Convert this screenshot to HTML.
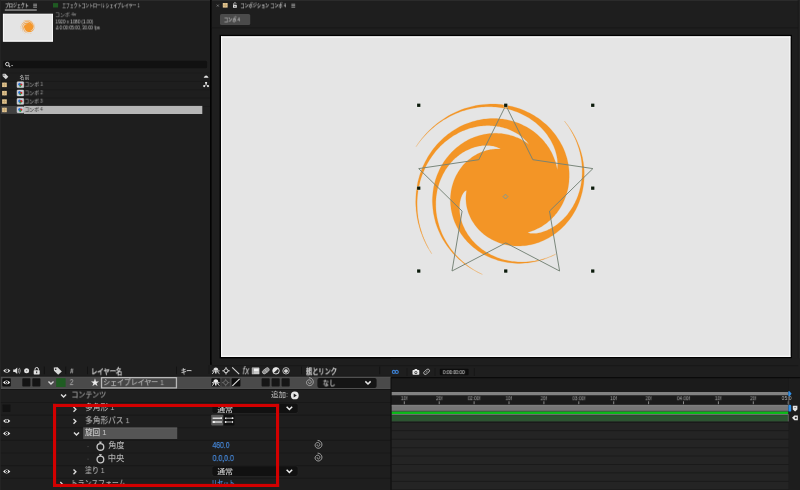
<!DOCTYPE html>
<html lang="ja">
<head>
<meta charset="utf-8">
<title>After Effects</title>
<style>
html,body{margin:0;padding:0;}
body{width:800px;height:490px;overflow:hidden;background:#1e1e1e;font-family:"Liberation Sans","Noto Sans CJK JP",sans-serif;}
#app{position:relative;width:800px;height:490px;overflow:hidden;background:#1e1e1e;}
#app svg{position:absolute;left:0;top:0;display:block;}
#app span{position:absolute;display:block;left:0;top:0;white-space:pre;line-height:1;transform-origin:0 0;will-change:transform;}
#app svg.top{z-index:5;}
</style>
</head>
<body>
<div id="app">
<svg width="800" height="490" viewBox="0 0 800 490">
<rect x="0" y="0" width="800" height="1" fill="#2b2b2b"/>
<rect x="4.8" y="9.3" width="32" height="1.5" fill="#8c8c8c"/>
<g transform="translate(33.2 3.5)"><path d="M0 .7H3.8M0 2.2H3.8M0 3.7H3.8" stroke="#a2a2a2" stroke-width=".85"/></g>
<rect x="53" y="3.1" width="5.1" height="4.4" fill="#1f5a22"/>
<rect x="2.9" y="13.7" width="50.1" height="28.1" fill="#ffffff"/>
<rect x="3.6" y="14.3" width="48.7" height="26.3" fill="#e4e4e4"/>
<path d="M32.45 32.77L30.59 33.42L28.70 33.52L26.96 33.11L25.50 32.29L24.39 31.17L23.70 29.87L23.42 28.53L23.51 27.25L23.92 26.13L24.57 25.24L25.35 24.58L26.19 24.17L27.00 23.98L27.75 23.96L27.39 23.79L26.89 23.67L26.25 23.66L25.51 23.79L24.70 24.11L23.89 24.67L23.14 25.47L22.55 26.52L22.21 27.79L22.18 29.21L22.54 30.71L23.33 32.17L24.54 33.46L26.15 34.47L24.40 33.42L23.08 32.01L22.23 30.40L21.88 28.71L21.98 27.09L22.49 25.64L23.30 24.44L24.33 23.54L25.46 22.96L26.60 22.67L27.69 22.65L28.66 22.83L29.49 23.16L30.16 23.57L29.79 23.15L29.27 22.73L28.56 22.36L27.69 22.09L26.65 21.98L25.50 22.11L24.30 22.51L23.11 23.22L22.05 24.26L21.20 25.61L20.67 27.22L20.56 29.02L20.92 30.91L21.81 32.74L20.81 30.72L20.43 28.61L20.65 26.58L21.38 24.77L22.52 23.29L23.95 22.22L25.53 21.59L27.12 21.39L28.61 21.58L29.92 22.09L30.99 22.84L31.79 23.74L32.31 24.71L32.58 25.68L32.62 25.29L32.59 24.78L32.45 24.17L32.17 23.49L31.71 22.75L31.05 22.02L30.17 21.36L29.07 20.82L27.77 20.48L26.31 20.41L24.75 20.67L23.19 21.30L21.72 22.33L20.46 23.75L22.02 22.01L23.93 20.82L26.02 20.24L28.09 20.26L29.98 20.82L31.54 21.82L32.69 23.14L33.39 24.63L33.61 26.16L33.42 27.60L32.87 28.85L32.06 29.84L31.08 30.53L30.05 30.93L30.18 31.01L30.43 31.05L30.80 31.03L31.27 30.93L31.83 30.72L32.46 30.36L33.10 29.83L33.71 29.11L34.23 28.18L34.60 27.07L34.73 25.79L34.57 24.41L34.07 22.98L33.20 21.60L34.34 23.41L34.86 25.37L34.79 27.30L34.17 29.03L33.13 30.44L31.79 31.43L30.31 31.97L28.82 32.07L27.46 31.76L26.33 31.14L25.49 30.29L24.96 29.32L24.75 28.34L24.80 27.43L24.65 27.49L24.49 27.67L24.34 27.99L24.22 28.44L24.19 29.02L24.28 29.72L24.55 30.49L25.03 31.30L25.75 32.08L26.73 32.74L27.95 33.22L29.36 33.43L30.89 33.30Z" fill="#f39526"/>
<circle cx="28" cy="26.3" r="6.6" fill="#f7a040" opacity=".18"/>
<rect x="3.1" y="60.8" width="204" height="7.5" rx="1.5" fill="#111111"/>
<circle cx="7.3" cy="64.1" r="1.75" fill="none" stroke="#cfcfcf" stroke-width="1"/><path d="M8.6 65.4L10.2 67" stroke="#cfcfcf" stroke-width="1.1"/><path d="M11 64.9H13.2L12.1 66.2Z" fill="#bdbdbd"/>
<g transform="translate(2 73)"><path d="M.6 .8L3.2 .6L6.3 3.8L3.8 6.3L.7 3.2Z" fill="#d6d6d6"/><circle cx="2" cy="2.1" r=".6" fill="#1e1e1e"/></g>
<g transform="translate(203.1 74.5)"><path d="M.5 3.2Q3 -1.2 5.5 3.2Z" fill="#e6e6e6"/></g>
<g transform="translate(202.9 81.5)"><circle cx="3.2" cy="1.3" r="1.1" fill="#e6e6e6"/><circle cx="1.3" cy="4.6" r="1.1" fill="#e6e6e6"/><circle cx="5.1" cy="4.6" r="1.1" fill="#e6e6e6"/><path d="M3.2 1.3V3M1.3 4.6L3.2 3L5.1 4.6" stroke="#e6e6e6" stroke-width=".7" fill="none"/></g>
<rect x="0" y="72.6" width="210" height="0.8" fill="#191919"/>
<rect x="0" y="80.95" width="210" height="0.8" fill="#191919"/>
<rect x="0" y="89.3" width="210" height="0.8" fill="#191919"/>
<rect x="0" y="97.65" width="210" height="0.8" fill="#191919"/>
<rect x="0" y="106" width="210" height="0.8" fill="#191919"/>
<rect x="0" y="106" width="24" height="7.9" fill="#414141"/>
<rect x="24" y="105.9" width="178.3" height="8.1" fill="#b6b6b6"/>
<rect x="2.1" y="82.6" width="4.7" height="4.5" fill="#e4c692"/>
<g transform="translate(2.1 82.6)"><path d="M2.35 0V4.5M0 2.25H4.7" stroke="#b59a66" stroke-width=".55"/></g>
<g transform="translate(16.8 81.5)"><rect x=".3" y=".3" width="6.6" height="5.8" rx=".6" fill="#c9cdd6" stroke="#e8e8e8" stroke-width=".5"/><circle cx="2.9" cy="2.8" r="1.5" fill="#2d6fd6"/><circle cx="4.4" cy="3.1" r="1.2" fill="#d0302a"/><circle cx="3.5" cy="4.3" r="1.1" fill="#2e9a4a"/></g>
<rect x="2.1" y="90.9" width="4.7" height="4.5" fill="#e4c692"/>
<g transform="translate(2.1 90.9)"><path d="M2.35 0V4.5M0 2.25H4.7" stroke="#b59a66" stroke-width=".55"/></g>
<g transform="translate(16.8 89.8)"><rect x=".3" y=".3" width="6.6" height="5.8" rx=".6" fill="#c9cdd6" stroke="#e8e8e8" stroke-width=".5"/><circle cx="2.9" cy="2.8" r="1.5" fill="#2d6fd6"/><circle cx="4.4" cy="3.1" r="1.2" fill="#d0302a"/><circle cx="3.5" cy="4.3" r="1.1" fill="#2e9a4a"/></g>
<rect x="2.1" y="99.3" width="4.7" height="4.5" fill="#e4c692"/>
<g transform="translate(2.1 99.3)"><path d="M2.35 0V4.5M0 2.25H4.7" stroke="#b59a66" stroke-width=".55"/></g>
<g transform="translate(16.8 98.2)"><rect x=".3" y=".3" width="6.6" height="5.8" rx=".6" fill="#c9cdd6" stroke="#e8e8e8" stroke-width=".5"/><circle cx="2.9" cy="2.8" r="1.5" fill="#2d6fd6"/><circle cx="4.4" cy="3.1" r="1.2" fill="#d0302a"/><circle cx="3.5" cy="4.3" r="1.1" fill="#2e9a4a"/></g>
<rect x="2.1" y="107.7" width="4.7" height="4.5" fill="#e4c692"/>
<g transform="translate(2.1 107.7)"><path d="M2.35 0V4.5M0 2.25H4.7" stroke="#b59a66" stroke-width=".55"/></g>
<g transform="translate(16.8 106.6)"><rect x=".3" y=".3" width="6.6" height="5.8" rx=".6" fill="#c9cdd6" stroke="#e8e8e8" stroke-width=".5"/><circle cx="2.9" cy="2.8" r="1.5" fill="#2d6fd6"/><circle cx="4.4" cy="3.1" r="1.2" fill="#d0302a"/><circle cx="3.5" cy="4.3" r="1.1" fill="#2e9a4a"/></g>
<rect x="210.1" y="0" width="1.6" height="364.8" fill="#000000"/>
<rect x="208.6" y="365" width="0.8" height="9" fill="#161616"/>
<rect x="211.8" y="1" width="588.2" height="27" fill="#1e1e1e"/>
<rect x="211.8" y="27.3" width="588.2" height="1.9" fill="#171717"/>
<rect x="211.8" y="28.4" width="588.2" height="334" fill="#1e1e1e"/>
<g transform="translate(216.6 4.4)"><path d="M.2 .2L2.2 2.2M2.2 .2L.2 2.2" stroke="#a0a0a0" stroke-width=".6"/></g>
<rect x="222.8" y="3" width="4.8" height="4.6" fill="#e4c692"/>
<g transform="translate(222.8 3)"><path d="M2.4 0V4.6M0 2.3H4.8" stroke="#b59a66" stroke-width=".55"/></g>
<g transform="translate(232.4 2.2)"><rect x=".6" y="2.6" width="3.8" height="3" rx=".4" fill="#e0e0e0"/><path d="M1.3 2.8V1.7Q1.3 .5 2.5 .5Q3.7 .5 3.7 1.5" fill="none" stroke="#e0e0e0" stroke-width=".7"/><circle cx="2.5" cy="4.1" r=".6" fill="#1e1e1e"/></g>
<g transform="translate(291.4 3.5)"><path d="M0 .7H3.8M0 2.2H3.8M0 3.7H3.8" stroke="#a2a2a2" stroke-width=".85"/></g>
<rect x="220" y="13.9" width="30.2" height="11.1" rx="1.6" fill="#4b4b4b"/>
<rect x="219.6" y="34.8" width="572.2" height="323.6" fill="#000000"/>
<rect x="221" y="36.4" width="569.4" height="320.5" fill="#e5e5e5"/>
<rect x="221" y="36.3" width="569.4" height="1.3" fill="#fbfbfb"/>
<rect x="221" y="355.7" width="569.4" height="1.2" fill="#fbfbfb"/>
<rect x="221" y="36.4" width="1.1" height="320.5" fill="#f8f8f8"/>
<rect x="789.4" y="36.4" width="1" height="320.5" fill="#f8f8f8"/>
<g transform="translate(0 0)"><path d="M555.7 254.2L553.3 255.4L550.8 256.6L548.3 257.6L545.7 258.6L543.2 259.5L540.6 260.3L538.0 261.0L535.5 261.6L532.9 262.1L530.3 262.5L527.7 262.9L525.1 263.1L522.6 263.3L520.0 263.4L517.5 263.4L514.9 263.3L512.4 263.1L509.9 262.8L507.5 262.5L505.1 262.1L502.7 261.6L500.3 261.0L498.0 260.4L495.7 259.6L493.4 258.8L491.2 258.0L489.0 257.0L486.9 256.1L484.8 255.0L482.8 253.9L480.9 252.7L478.9 251.5L477.1 250.2L475.3 248.8L473.5 247.4L471.8 246.0L470.2 244.5L468.6 243.0L467.1 241.4L465.7 239.8L464.3 238.2L463.0 236.5L461.7 234.8L460.5 233.1L459.4 231.3L458.4 229.6L457.4 227.8L456.5 225.9L455.6 224.1L454.8 222.3L454.1 220.4L453.4 218.5L452.9 216.7L452.3 214.8L451.9 212.9L451.5 211.0L451.1 209.2L450.9 207.3L450.7 205.5L450.5 203.6L450.4 201.8L450.4 199.9L450.4 198.1L450.5 196.3L450.7 194.6L450.9 192.8L451.1 191.1L451.4 189.4L451.8 187.7L452.2 186.0L452.7 184.4L453.2 182.8L453.7 181.2L454.3 179.7L454.9 178.2L455.6 176.7L456.3 175.3L457.1 173.9L457.9 172.5L458.7 171.2L459.5 169.9L460.4 168.7L461.3 167.4L462.2 166.3L463.2 165.1L464.2 164.0L465.2 163.0L466.2 162.0L467.3 161.0L468.3 160.1L469.4 159.2L470.5 158.4L471.6 157.6L472.7 156.8L473.8 156.1L474.9 155.4L476.1 154.7L477.2 154.1L478.4 153.5L479.5 153.0L480.6 152.5L481.8 152.1L482.9 151.6L484.1 151.3L485.2 150.9L486.3 150.6L487.4 150.3L488.5 150.0L489.6 149.8L490.7 149.6L491.8 149.5L492.9 149.3L493.9 149.2L495.0 149.1L496.0 149.1L497.0 149.0L498.0 149.0L499.0 149.0L500.0 149.1L500.9 149.1L500.5 148.9L500.1 148.6L499.7 148.4L499.2 148.1L498.7 147.9L498.2 147.7L497.7 147.5L497.1 147.2L496.5 147.0L495.9 146.8L495.3 146.7L494.7 146.5L494.0 146.3L493.3 146.1L492.6 146.0L491.8 145.9L491.1 145.8L490.3 145.7L489.5 145.6L488.7 145.5L487.8 145.5L486.9 145.4L486.1 145.4L485.2 145.5L484.2 145.5L483.3 145.6L482.3 145.6L481.4 145.7L480.4 145.9L479.4 146.1L478.3 146.2L477.3 146.5L476.3 146.7L475.2 147.0L474.1 147.3L473.1 147.7L472.0 148.0L470.9 148.4L469.8 148.9L468.7 149.4L467.6 149.9L466.4 150.4L465.3 151.0L464.2 151.7L463.1 152.3L462.0 153.0L460.9 153.8L459.8 154.6L458.7 155.4L457.6 156.3L456.5 157.2L455.4 158.1L454.3 159.1L453.3 160.1L452.2 161.2L451.2 162.3L450.2 163.5L449.2 164.7L448.3 165.9L447.3 167.2L446.4 168.5L445.5 169.8L444.7 171.2L443.9 172.7L443.1 174.1L442.3 175.7L441.6 177.2L440.9 178.8L440.2 180.4L439.6 182.1L439.0 183.7L438.5 185.5L438.0 187.2L437.5 189.0L437.1 190.8L436.8 192.7L436.5 194.5L436.2 196.4L436.0 198.4L435.9 200.3L435.8 202.3L435.8 204.3L435.8 206.3L435.9 208.3L436.0 210.3L436.2 212.4L436.5 214.4L436.8 216.5L437.2 218.6L437.7 220.7L438.2 222.7L438.8 224.8L439.4 226.9L440.1 229.0L440.9 231.1L441.8 233.2L442.7 235.2L443.7 237.3L444.8 239.3L445.9 241.3L447.1 243.3L448.4 245.3L449.7 247.2L451.1 249.2L452.6 251.1L454.1 252.9L455.7 254.8L457.4 256.6L459.1 258.3L461.0 260.0L462.8 261.7L464.8 263.3L466.8 264.9L468.8 266.5L470.9 267.9L473.1 269.4L475.3 270.7L477.6 272.0L480.0 273.3L482.4 274.4L479.8 273.2L477.2 272.0L474.7 270.6L472.3 269.2L469.9 267.7L467.6 266.2L465.4 264.6L463.2 262.9L461.1 261.1L459.1 259.4L457.1 257.5L455.2 255.6L453.3 253.7L451.6 251.7L449.9 249.6L448.3 247.6L446.8 245.4L445.3 243.3L443.9 241.1L442.6 238.9L441.4 236.7L440.3 234.4L439.2 232.1L438.2 229.8L437.3 227.5L436.5 225.2L435.7 222.9L435.1 220.5L434.5 218.2L434.0 215.8L433.5 213.5L433.2 211.1L432.9 208.8L432.7 206.4L432.5 204.1L432.4 201.8L432.4 199.5L432.5 197.2L432.7 195.0L432.9 192.7L433.2 190.5L433.5 188.3L433.9 186.1L434.4 184.0L434.9 181.9L435.5 179.8L436.2 177.8L436.9 175.8L437.7 173.8L438.5 171.9L439.3 170.0L440.3 168.1L441.2 166.3L442.3 164.5L443.3 162.8L444.4 161.1L445.6 159.5L446.7 157.9L448.0 156.4L449.2 154.9L450.5 153.5L451.8 152.1L453.2 150.7L454.5 149.4L455.9 148.2L457.4 147.0L458.8 145.9L460.3 144.8L461.8 143.8L463.3 142.8L464.8 141.8L466.3 141.0L467.8 140.1L469.4 139.3L470.9 138.6L472.5 137.9L474.1 137.3L475.6 136.7L477.2 136.2L478.8 135.7L480.3 135.3L481.9 134.9L483.4 134.5L485.0 134.2L486.5 134.0L488.1 133.7L489.6 133.6L491.1 133.4L492.6 133.4L494.1 133.3L495.6 133.3L497.0 133.3L498.5 133.4L499.9 133.5L501.3 133.6L502.7 133.8L504.0 134.0L505.4 134.2L506.7 134.4L508.0 134.7L509.3 135.0L510.5 135.4L511.8 135.7L513.0 136.1L514.2 136.5L515.3 136.9L516.5 137.4L517.6 137.8L518.7 138.3L519.7 138.8L520.8 139.3L521.8 139.9L522.8 140.4L523.8 141.0L524.7 141.5L525.6 142.1L526.5 142.7L527.4 143.3L528.2 143.9L529.0 144.5L528.6 143.9L528.2 143.4L527.7 142.8L527.3 142.2L526.8 141.6L526.2 141.0L525.7 140.5L525.1 139.9L524.5 139.3L523.9 138.7L523.2 138.1L522.6 137.5L521.9 136.9L521.1 136.3L520.4 135.7L519.6 135.2L518.8 134.6L517.9 134.0L517.0 133.5L516.1 132.9L515.2 132.4L514.2 131.9L513.3 131.4L512.2 130.9L511.2 130.4L510.1 129.9L509.0 129.5L507.9 129.0L506.8 128.6L505.6 128.2L504.4 127.9L503.1 127.5L501.9 127.2L500.6 126.9L499.3 126.6L497.9 126.4L496.6 126.2L495.2 126.0L493.8 125.9L492.4 125.7L490.9 125.7L489.5 125.6L488.0 125.6L486.5 125.6L484.9 125.7L483.4 125.8L481.8 125.9L480.3 126.1L478.7 126.3L477.1 126.6L475.5 126.9L473.9 127.3L472.3 127.7L470.6 128.1L469.0 128.6L467.3 129.2L465.7 129.8L464.1 130.4L462.4 131.1L460.8 131.8L459.1 132.6L457.5 133.5L455.9 134.4L454.2 135.3L452.6 136.3L451.0 137.4L449.5 138.5L447.9 139.7L446.3 140.9L444.8 142.1L443.3 143.5L441.8 144.8L440.3 146.3L438.9 147.7L437.5 149.3L436.1 150.8L434.8 152.5L433.5 154.2L432.2 155.9L431.0 157.7L429.8 159.5L428.6 161.4L427.5 163.3L426.4 165.3L425.4 167.3L424.5 169.4L423.6 171.5L422.7 173.7L421.9 175.8L421.1 178.1L420.4 180.3L419.8 182.7L419.3 185.0L418.7 187.4L418.3 189.8L417.9 192.2L417.6 194.7L417.4 197.1L417.2 199.7L417.1 202.2L417.1 204.7L417.2 207.3L417.3 209.9L417.5 212.5L417.8 215.1L418.1 217.7L418.6 220.3L419.1 223.0L419.7 225.6L420.4 228.2L421.2 230.8L422.0 233.5L422.9 236.1L424.0 238.7L425.1 241.2L426.2 243.8L427.5 246.3L428.8 248.9L430.3 251.4L431.8 253.8L430.1 251.1L428.4 248.4L426.9 245.7L425.5 242.9L424.1 240.1L422.9 237.2L421.8 234.3L420.7 231.4L419.8 228.5L419.0 225.6L418.2 222.7L417.6 219.7L417.0 216.8L416.6 213.8L416.2 210.9L416.0 208.0L415.8 205.0L415.7 202.1L415.8 199.2L415.9 196.3L416.1 193.5L416.4 190.6L416.8 187.8L417.3 185.1L417.8 182.3L418.5 179.6L419.2 176.9L420.0 174.3L420.9 171.7L421.9 169.1L422.9 166.6L424.0 164.2L425.2 161.8L426.5 159.4L427.8 157.1L429.1 154.9L430.6 152.7L432.1 150.6L433.6 148.5L435.3 146.5L436.9 144.6L438.6 142.7L440.4 140.9L442.2 139.2L444.0 137.5L445.9 135.9L447.9 134.3L449.8 132.9L451.8 131.5L453.8 130.2L455.9 128.9L457.9 127.7L460.0 126.6L462.1 125.6L464.3 124.6L466.4 123.7L468.6 122.9L470.7 122.2L472.9 121.5L475.1 120.9L477.3 120.3L479.4 119.9L481.6 119.5L483.8 119.1L486.0 118.9L488.1 118.7L490.3 118.6L492.4 118.5L494.5 118.5L496.6 118.6L498.7 118.7L500.8 118.9L502.8 119.1L504.8 119.4L506.8 119.8L508.8 120.2L510.7 120.7L512.7 121.2L514.5 121.8L516.4 122.4L518.2 123.1L520.0 123.8L521.7 124.6L523.4 125.4L525.1 126.2L526.7 127.1L528.3 128.0L529.9 129.0L531.4 130.0L532.9 131.0L534.3 132.1L535.7 133.2L537.0 134.3L538.3 135.5L539.6 136.7L540.8 137.9L542.0 139.1L543.1 140.3L544.2 141.6L545.2 142.9L546.2 144.1L547.2 145.4L548.1 146.8L549.0 148.1L549.8 149.4L550.5 150.8L551.3 152.1L552.0 153.5L552.6 154.8L553.2 156.2L553.8 157.6L554.3 158.9L554.8 160.3L555.3 161.6L555.7 163.0L556.1 164.3L556.4 165.7L556.7 167.0L557.0 168.3L557.2 169.7L557.3 169.2L557.4 168.7L557.5 168.2L557.5 167.7L557.6 167.1L557.6 166.5L557.6 166.0L557.6 165.4L557.7 164.7L557.7 164.1L557.6 163.4L557.6 162.7L557.6 162.0L557.5 161.3L557.5 160.6L557.4 159.8L557.3 159.1L557.2 158.3L557.0 157.5L556.9 156.7L556.7 155.8L556.5 155.0L556.3 154.1L556.1 153.2L555.8 152.3L555.6 151.4L555.3 150.5L555.0 149.6L554.6 148.6L554.3 147.7L553.9 146.7L553.5 145.8L553.0 144.8L552.5 143.8L552.0 142.8L551.5 141.8L551.0 140.8L550.4 139.7L549.8 138.7L549.1 137.7L548.4 136.7L547.7 135.6L547.0 134.6L546.2 133.6L545.4 132.6L544.6 131.5L543.7 130.5L542.8 129.5L541.9 128.5L540.9 127.5L539.9 126.5L538.8 125.5L537.7 124.6L536.6 123.6L535.5 122.6L534.3 121.7L533.1 120.8L531.8 119.9L530.5 119.0L529.2 118.1L527.8 117.3L526.4 116.5L525.0 115.7L523.5 114.9L522.0 114.2L520.5 113.4L518.9 112.7L517.3 112.1L515.7 111.5L514.0 110.9L512.3 110.3L510.6 109.8L508.8 109.3L507.0 108.8L505.2 108.4L503.4 108.1L501.5 107.7L499.6 107.5L497.7 107.2L495.7 107.0L493.8 106.9L491.8 106.8L489.8 106.7L487.7 106.7L485.7 106.8L483.6 106.9L481.5 107.1L479.4 107.3L477.3 107.5L475.2 107.9L473.1 108.3L471.0 108.7L468.8 109.2L466.7 109.8L464.6 110.4L462.4 111.1L460.3 111.8L458.1 112.7L456.0 113.5L453.9 114.5L451.8 115.5L449.7 116.5L447.6 117.7L445.5 118.9L443.4 120.1L441.4 121.5L439.4 122.8L437.4 124.3L435.4 125.8L433.5 127.4L431.6 129.0L429.7 130.8L427.8 132.5L426.0 134.4L424.3 136.3L422.5 138.2L420.8 140.3L419.2 142.3L417.6 144.5L416.1 146.7L417.9 143.9L419.8 141.3L421.8 138.7L423.9 136.2L426.0 133.8L428.2 131.5L430.5 129.2L432.9 127.1L435.3 125.0L437.7 123.0L440.2 121.2L442.8 119.4L445.4 117.7L448.0 116.1L450.7 114.6L453.4 113.2L456.1 111.9L458.9 110.7L461.7 109.6L464.5 108.6L467.4 107.7L470.2 106.9L473.1 106.2L475.9 105.6L478.8 105.1L481.6 104.7L484.5 104.4L487.4 104.2L490.2 104.1L493.0 104.1L495.8 104.1L498.6 104.3L501.4 104.6L504.1 104.9L506.9 105.4L509.5 105.9L512.2 106.5L514.8 107.2L517.4 108.0L519.9 108.8L522.4 109.8L524.8 110.8L527.2 111.9L529.6 113.0L531.8 114.3L534.1 115.6L536.2 116.9L538.4 118.3L540.4 119.8L542.4 121.4L544.3 123.0L546.2 124.6L548.0 126.3L549.7 128.1L551.3 129.8L552.9 131.7L554.4 133.6L555.9 135.5L557.2 137.4L558.5 139.4L559.8 141.4L560.9 143.4L562.0 145.5L563.0 147.5L563.9 149.6L564.8 151.7L565.5 153.8L566.2 156.0L566.9 158.1L567.4 160.2L567.9 162.4L568.3 164.5L568.6 166.6L568.9 168.8L569.1 170.9L569.2 173.0L569.2 175.1L569.2 177.2L569.1 179.3L569.0 181.3L568.8 183.3L568.5 185.3L568.2 187.3L567.8 189.3L567.3 191.2L566.8 193.1L566.2 195.0L565.6 196.8L564.9 198.6L564.2 200.3L563.4 202.1L562.6 203.8L561.7 205.4L560.8 207.0L559.9 208.6L558.9 210.1L557.8 211.5L556.8 213.0L555.6 214.3L554.5 215.7L553.3 217.0L552.1 218.2L550.9 219.4L549.7 220.5L548.4 221.6L547.1 222.7L545.8 223.7L544.5 224.6L543.1 225.5L541.8 226.4L540.4 227.2L539.0 227.9L537.6 228.6L536.2 229.3L534.8 229.9L533.4 230.5L532.0 231.0L530.6 231.4L529.2 231.9L527.8 232.3L527.9 232.4L528.0 232.5L528.2 232.6L528.3 232.7L528.5 232.8L528.7 232.9L528.9 233.0L529.1 233.1L529.4 233.2L529.7 233.3L530.0 233.3L530.3 233.4L530.6 233.5L531.0 233.5L531.3 233.6L531.7 233.6L532.1 233.6L532.6 233.6L533.0 233.6L533.5 233.6L534.0 233.6L534.5 233.6L535.0 233.6L535.5 233.5L536.1 233.5L536.6 233.4L537.2 233.3L537.8 233.2L538.4 233.1L539.1 233.0L539.7 232.8L540.4 232.7L541.1 232.5L541.8 232.3L542.5 232.1L543.2 231.8L543.9 231.6L544.7 231.3L545.5 231.0L546.2 230.7L547.0 230.4L547.8 230.0L548.6 229.6L549.5 229.2L550.3 228.8L551.1 228.3L552.0 227.9L552.8 227.3L553.7 226.8L554.5 226.3L555.4 225.7L556.3 225.1L557.1 224.4L558.0 223.7L558.9 223.0L559.8 222.3L560.6 221.6L561.5 220.8L562.4 220.0L563.3 219.1L564.1 218.2L565.0 217.3L565.8 216.4L566.7 215.4L567.5 214.4L568.3 213.3L569.1 212.2L569.9 211.1L570.7 210.0L571.5 208.8L572.3 207.6L573.0 206.4L573.7 205.1L574.4 203.8L575.1 202.5L575.7 201.1L576.4 199.7L577.0 198.3L577.6 196.8L578.1 195.3L578.6 193.8L579.1 192.2L579.6 190.7L580.0 189.0L580.4 187.4L580.8 185.7L581.1 184.1L581.4 182.3L581.6 180.6L581.8 178.8L582.0 177.0L582.1 175.2L582.2 173.4L582.2 171.5L582.2 169.7L582.2 167.8L582.0 165.9L581.9 164.0L581.7 162.0L581.4 160.1L581.1 158.1L580.8 156.2L580.3 154.2L579.9 152.2L579.3 150.2L578.8 148.2L578.1 146.2L577.4 144.3L576.7 142.3L575.9 140.3L575.0 138.3L574.0 136.3L573.1 134.4L572.0 132.4L570.9 130.5L569.7 128.5L568.5 126.6L567.2 124.7L565.8 122.9L564.4 121.0L566.3 123.4L568.1 125.8L569.8 128.2L571.5 130.7L573.0 133.3L574.4 135.8L575.8 138.4L577.0 141.1L578.1 143.8L579.2 146.4L580.1 149.1L581.0 151.9L581.7 154.6L582.4 157.3L582.9 160.1L583.4 162.8L583.7 165.6L584.0 168.3L584.2 171.1L584.2 173.8L584.2 176.5L584.1 179.2L583.9 181.8L583.6 184.5L583.2 187.1L582.7 189.7L582.2 192.2L581.5 194.8L580.8 197.2L580.0 199.7L579.2 202.1L578.2 204.4L577.2 206.7L576.1 209.0L574.9 211.2L573.7 213.3L572.4 215.4L571.0 217.4L569.6 219.4L568.1 221.3L566.6 223.1L565.0 224.9L563.4 226.6L561.7 228.3L560.0 229.8L558.2 231.3L556.4 232.8L554.6 234.1L552.7 235.4L550.8 236.6L548.9 237.8L546.9 238.8L544.9 239.8L542.9 240.7L540.9 241.6L538.9 242.4L536.9 243.0L534.8 243.7L532.8 244.2L530.7 244.7L528.7 245.1L526.6 245.4L524.6 245.7L522.6 245.8L520.5 246.0L518.5 246.0L516.5 246.0L514.6 245.9L512.6 245.7L510.7 245.5L508.7 245.2L506.9 244.9L505.0 244.5L503.2 244.0L501.4 243.5L499.6 242.9L497.9 242.2L496.2 241.6L494.5 240.8L492.9 240.0L491.3 239.2L489.8 238.3L488.3 237.4L486.8 236.4L485.4 235.4L484.0 234.4L482.7 233.3L481.5 232.2L480.2 231.0L479.1 229.9L478.0 228.7L476.9 227.4L475.9 226.2L474.9 224.9L474.0 223.6L473.1 222.3L472.3 221.0L471.5 219.7L470.8 218.3L470.2 217.0L469.6 215.6L469.0 214.2L468.5 212.9L468.0 211.5L467.6 210.1L467.2 208.7L466.9 207.4L466.6 206.0L466.4 204.7L466.2 203.3L466.1 202.0L466.0 200.6L465.9 199.3L465.9 198.0L465.9 196.7L466.0 195.4L466.1 194.2L466.2 192.9L466.4 191.7L466.6 190.5L466.4 190.5L466.2 190.6L466.0 190.6L465.8 190.7L465.7 190.7L465.5 190.8L465.2 191.0L465.0 191.1L464.8 191.3L464.6 191.4L464.4 191.6L464.2 191.9L464.0 192.1L463.8 192.4L463.5 192.7L463.3 193.0L463.1 193.3L462.9 193.7L462.7 194.0L462.4 194.4L462.2 194.9L462.0 195.3L461.8 195.8L461.6 196.3L461.4 196.8L461.2 197.3L461.0 197.8L460.8 198.4L460.7 199.0L460.5 199.6L460.3 200.3L460.2 200.9L460.0 201.6L459.9 202.3L459.8 203.1L459.7 203.8L459.6 204.6L459.6 205.4L459.5 206.2L459.5 207.0L459.5 207.9L459.5 208.7L459.5 209.6L459.5 210.5L459.6 211.4L459.7 212.4L459.8 213.3L459.9 214.3L460.1 215.3L460.2 216.3L460.5 217.3L460.7 218.4L461.0 219.4L461.3 220.5L461.6 221.5L461.9 222.6L462.3 223.7L462.7 224.8L463.2 225.9L463.7 227.0L464.2 228.1L464.7 229.3L465.3 230.4L466.0 231.5L466.6 232.6L467.3 233.8L468.1 234.9L468.8 236.0L469.7 237.1L470.5 238.2L471.4 239.3L472.3 240.4L473.3 241.5L474.3 242.6L475.4 243.7L476.5 244.7L477.6 245.7L478.8 246.8L480.0 247.7L481.2 248.7L482.5 249.7L483.8 250.6L485.2 251.5L486.6 252.4L488.1 253.2L489.6 254.1L491.1 254.9L492.6 255.6L494.2 256.3L495.9 257.0L497.5 257.7L499.2 258.3L501.0 258.9L502.8 259.4L504.6 259.9L506.4 260.3L508.2 260.7L510.1 261.1L512.1 261.4L514.0 261.6L516.0 261.8L517.9 261.9L520.0 262.0L522.0 262.1L524.0 262.0L526.1 261.9L528.2 261.8L530.3 261.6L532.4 261.3L534.5 261.0L536.6 260.6L538.7 260.2L540.9 259.7L543.0 259.1L545.1 258.4L547.3 257.7L549.4 256.9L551.5 256.1L553.6 255.2Z" fill="#f39526" fill-rule="nonzero" stroke="#f39526" stroke-width=".22" stroke-linejoin="round"/><path d="M505.8 105.3L532.8 159.7L592.9 168.6L549.5 211.1L559.6 271.0L505.8 242.9L452.0 271.0L462.1 211.1L418.7 168.6L478.8 159.7Z" fill="none" stroke="#748275" stroke-width=".95"/><rect x="417.1" y="103.6" width="3.3" height="3.3" fill="#0b1a0b" stroke="#fff" stroke-opacity=".55" stroke-width=".9" paint-order="stroke"/><rect x="417.1" y="186.5" width="3.3" height="3.3" fill="#0b1a0b" stroke="#fff" stroke-opacity=".55" stroke-width=".9" paint-order="stroke"/><rect x="417.1" y="269.4" width="3.3" height="3.3" fill="#0b1a0b" stroke="#fff" stroke-opacity=".55" stroke-width=".9" paint-order="stroke"/><rect x="504.1" y="103.6" width="3.3" height="3.3" fill="#0b1a0b" stroke="#fff" stroke-opacity=".55" stroke-width=".9" paint-order="stroke"/><rect x="504.1" y="269.4" width="3.3" height="3.3" fill="#0b1a0b" stroke="#fff" stroke-opacity=".55" stroke-width=".9" paint-order="stroke"/><rect x="591.1" y="103.6" width="3.3" height="3.3" fill="#0b1a0b" stroke="#fff" stroke-opacity=".55" stroke-width=".9" paint-order="stroke"/><rect x="591.1" y="186.5" width="3.3" height="3.3" fill="#0b1a0b" stroke="#fff" stroke-opacity=".55" stroke-width=".9" paint-order="stroke"/><rect x="591.1" y="269.4" width="3.3" height="3.3" fill="#0b1a0b" stroke="#fff" stroke-opacity=".55" stroke-width=".9" paint-order="stroke"/><path d="M505.5 194.2L507.9 196.6L505.5 199L503.1 196.6Z" fill="none" stroke="#6e97a3" stroke-width=".85"/></g>
<rect x="797.8" y="0" width="0.8" height="378" fill="#141414"/>
<rect x="798.6" y="0" width="1.4" height="490" fill="#242424"/>
<g transform="translate(2.8 367.8)"><path d="M.4 3Q4 -.9 7.6 3Q4 6.9 .4 3Z" fill="#e6e6e6"/><circle cx="4" cy="3" r="1.45" fill="#0a0a0a"/><circle cx="4" cy="3" r=".55" fill="#e6e6e6"/></g>
<g transform="translate(12.8 367.2)"><path d="M.4 2.4H2.2L4.4 .4V6.8L2.2 4.8H.4Z" fill="#dedede"/><path d="M5.4 1.6Q6.6 3.6 5.4 5.6M6.6 .7Q8.4 3.6 6.6 6.5" fill="none" stroke="#bdbdbd" stroke-width=".7"/></g>
<g transform="translate(23.8 368)"><circle cx="2.8" cy="2.8" r="2.5" fill="#e2e2e2"/><circle cx="2.8" cy="2.8" r=".7" fill="#777"/></g>
<g transform="translate(33.2 366.8)"><rect x=".5" y="3.4" width="6" height="4.2" rx=".6" fill="#e2e2e2"/><path d="M1.8 3.6V2.4Q1.8 .7 3.5 .7Q5.2 .7 5.2 2.4V3.6" fill="none" stroke="#e2e2e2" stroke-width="1"/><rect x="3" y="4.6" width="1" height="1.8" fill="#1e1e1e"/></g>
<rect x="43.9" y="366.6" width="0.8" height="7.6" fill="#111111"/>
<g transform="translate(53 366.4)"><path d="M.8 1.2L4.6 .8L8.8 5L5.2 8.4L1 4.4Z" fill="#d8d8d8"/><circle cx="2.7" cy="2.8" r=".8" fill="#1e1e1e"/></g>
<rect x="65.4" y="366.6" width="0.8" height="7.6" fill="#111111"/>
<rect x="87.1" y="366.6" width="0.8" height="7.6" fill="#111111"/>
<rect x="176.2" y="366.6" width="0.8" height="7.6" fill="#111111"/>
<g transform="translate(211.4 367)"><path d="M2 3.2Q2 .4 4.4 .4Q6.8 .4 6.8 3.2Z" fill="#dadada"/><path d="M.6 3.9H8.2" stroke="#dadada" stroke-width=".9"/><path d="M4.4 3.4V6.6" stroke="#dadada" stroke-width="1.5"/><path d="M2.6 4.2Q2.4 6 .7 6.7M6.2 4.2Q6.4 6 8.1 6.7" fill="none" stroke="#dadada" stroke-width="1"/></g>
<g transform="translate(222 366.8)"><circle cx="4" cy="4" r="2" fill="none" stroke="#dadada" stroke-width="1"/><path d="M4 .3V2M4 6V7.7M.3 4H2M6 4H7.7" stroke="#dadada" stroke-width="1"/></g>
<g transform="translate(231.6 366.8)"><path d="M.6 .5L7.6 7.3" stroke="#d4d4d4" stroke-width="1.1"/></g>
<g transform="translate(251.4 367)"><rect x=".4" y=".4" width="7.6" height="6.8" rx=".5" fill="#c9c9c9"/><rect x="2.6" y="2" width="4.6" height="2" fill="#f2f2f2"/><rect x=".9" y=".9" width="1.4" height="5.8" fill="#9a9a9a"/></g>
<g transform="translate(261.4 367)"><g transform="rotate(-38 4.4 3.8)"><rect x=".6" y="1.9" width="7.6" height="3.8" rx="1.9" fill="#8e8e8e" stroke="#c4c4c4" stroke-width=".7"/><path d="M4.4 1.9V5.7" stroke="#c4c4c4" stroke-width=".6"/></g></g>
<g transform="translate(272.2 367)"><circle cx="3.8" cy="3.8" r="3.3" fill="#e6e6e6"/><path d="M1.5 6.1A3.3 3.3 0 0 0 6.1 1.5Z" fill="#2a2a2a"/><circle cx="3.8" cy="3.8" r="3.3" fill="none" stroke="#e6e6e6" stroke-width=".7"/></g>
<g transform="translate(282.2 367)"><circle cx="3.8" cy="3.8" r="3.2" fill="none" stroke="#d6d6d6" stroke-width=".8"/><path d="M3.8 2L5.6 3V5L3.8 5.9L2 5V3Z" fill="#d6d6d6"/></g>
<rect x="301.1" y="366.6" width="0.8" height="7.6" fill="#111111"/>
<rect x="379.3" y="366.6" width="0.8" height="7.6" fill="#111111"/>
<rect x="0" y="375.9" width="391" height="1" fill="#161616"/>
<rect x="0" y="376.8" width="391" height="12.2" fill="#4a4a4a"/>
<rect x="0" y="376.8" width="391" height="0.7" fill="#565656"/>
<rect x="0" y="388.3" width="391" height="0.7" fill="#545454"/>
<rect x="2.3" y="378.3" width="8.5" height="8.2" rx="0.8" fill="#0e0e0e"/>
<g transform="translate(2.6 379.4)"><path d="M.4 3Q4 -.9 7.6 3Q4 6.9 .4 3Z" fill="#f4f4f4"/><circle cx="4" cy="3" r="1.45" fill="#0a0a0a"/><circle cx="4" cy="3" r=".55" fill="#f4f4f4"/></g>
<rect x="22.3" y="378.3" width="8.1" height="8.2" rx="0.8" fill="#141414"/>
<rect x="32.3" y="378.3" width="8.1" height="8.2" rx="0.8" fill="#141414"/>
<g transform="translate(47.85 380.8) scale(1.05 1.05) translate(-0 -0)"><path d="M.6 .7L3 3.1L5.4 .7" fill="none" stroke="#d6d6d6" stroke-width="1.35"/></g>
<rect x="56.2" y="378.2" width="9.4" height="8.8" fill="#1f5c22"/>
<rect x="100.9" y="377" width="76.2" height="11.6" rx="0.6" fill="#b8b8b8"/>
<rect x="102.2" y="378.3" width="73.6" height="9" fill="#474747"/>
<rect x="211.4" y="378.3" width="8.9" height="8.2" rx="0.8" fill="#101010"/>
<g transform="translate(211.4 378.8)"><path d="M2 3.2Q2 .4 4.4 .4Q6.8 .4 6.8 3.2Z" fill="#ececec"/><path d="M.6 3.9H8.2" stroke="#ececec" stroke-width=".9"/><path d="M4.4 3.4V6.6" stroke="#ececec" stroke-width="1.5"/><path d="M2.6 4.2Q2.4 6 .7 6.7M6.2 4.2Q6.4 6 8.1 6.7" fill="none" stroke="#ececec" stroke-width="1"/></g>
<rect x="221.5" y="378.3" width="8.3" height="8.2" rx="0.8" fill="#333333"/>
<g transform="translate(221.7 378.6)"><circle cx="4" cy="4" r="2" fill="none" stroke="#6a6a6a" stroke-width="1"/><path d="M4 .3V2M4 6V7.7M.3 4H2M6 4H7.7" stroke="#6a6a6a" stroke-width="1"/></g>
<rect x="231.6" y="378.3" width="8.8" height="8.2" rx="0.8" fill="#0c0c0c"/>
<g transform="translate(231.6 378.3)"><path d="M.8 7.6L8 .6" stroke="#e6e6e6" stroke-width="1.1"/></g>
<rect x="261.6" y="378.3" width="8.1" height="8.2" rx="0.8" fill="#161616"/>
<rect x="271.6" y="378.3" width="8.1" height="8.2" rx="0.8" fill="#161616"/>
<rect x="281.6" y="378.3" width="8.1" height="8.2" rx="0.8" fill="#161616"/>
<g transform="translate(303.9 376.7)"><path d="M4.70 5.50L4.65 5.67L4.64 5.86L4.67 6.05L4.75 6.25L4.88 6.43L5.05 6.60L5.26 6.73L5.50 6.81L5.77 6.85L6.05 6.83L6.34 6.75L6.61 6.61L6.86 6.41L7.07 6.15L7.23 5.84L7.33 5.50L7.36 5.13L7.31 4.75L7.18 4.38L6.97 4.03L6.69 3.71L6.35 3.45L5.94 3.27L5.50 3.16L5.03 3.14L4.55 3.22L4.09 3.39L3.66 3.66L3.28 4.02L2.98 4.46L2.76 4.96L2.64 5.50L2.63 6.07L2.74 6.64L2.96 7.19L3.30 7.70L3.73 8.14L4.26 8.50L4.85 8.74L5.50 8.87L6.17 8.87L6.84 8.73L7.48 8.46L8.07 8.07L8.57 7.55L8.97 6.94L9.25 6.25L9.39 5.50L9.37 4.73L9.21 3.96L8.89 3.23L8.43 2.57L7.84 2.00L7.13 1.55L6.35 1.25L5.50 1.10" fill="none" stroke="#ababab" stroke-width="1" stroke-linecap="round" stroke-linejoin="round"/></g>
<rect x="317.4" y="377.9" width="59.2" height="10.2" rx="2" fill="#151515"/>
<g transform="translate(364.7 380.6) scale(1.1 1.1) translate(-0 -0)"><path d="M.6 .7L3 3.1L5.4 .7" fill="none" stroke="#e6e6e6" stroke-width="1.35"/></g>
<rect x="0" y="402" width="391" height="0.9" fill="#181818"/>
<rect x="0" y="414.7" width="391" height="0.9" fill="#181818"/>
<rect x="0" y="427.3" width="391" height="0.9" fill="#181818"/>
<rect x="0" y="439.9" width="391" height="0.9" fill="#181818"/>
<rect x="0" y="452.6" width="391" height="0.9" fill="#181818"/>
<rect x="0" y="465.2" width="391" height="0.9" fill="#181818"/>
<rect x="0" y="477.8" width="391" height="0.9" fill="#181818"/>
<rect x="0" y="389" width="391" height="0.9" fill="#141414"/>
<g transform="translate(60.45 393.8) scale(1.05 1.05) translate(-0 -0)"><path d="M.6 .7L3 3.1L5.4 .7" fill="none" stroke="#dcdcdc" stroke-width="1.35"/></g>
<g transform="translate(290.6 391.2)"><circle cx="4.2" cy="4.2" r="3.9" fill="#e8e8e8"/><path d="M3.1 2.2L6.2 4.2L3.1 6.2Z" fill="#1e1e1e"/></g>
<rect x="2.5" y="404.4" width="8" height="7.6" rx="0.8" fill="#121212"/>
<g transform="translate(72.8 406.3)"><path d="M.7 .6L3.1 3L.7 5.4" fill="none" stroke="#dcdcdc" stroke-width="1.35"/></g>
<rect x="211.8" y="403" width="86.4" height="10.6" rx="2.2" fill="#262626"/>
<rect x="212.3" y="403.5" width="85.4" height="9.6" rx="1.8" fill="#111111"/>
<g transform="translate(285.95 405.9) scale(1.15 1.15) translate(-0 -0)"><path d="M.6 .7L3 3.1L5.4 .7" fill="none" stroke="#ececec" stroke-width="1.35"/></g>
<g transform="translate(2.7 418)"><path d="M.4 3Q4 -.9 7.6 3Q4 6.9 .4 3Z" fill="#f0f0f0"/><circle cx="4" cy="3" r="1.45" fill="#0a0a0a"/><circle cx="4" cy="3" r=".55" fill="#f0f0f0"/></g>
<g transform="translate(72.8 418.3)"><path d="M.7 .6L3.1 3L.7 5.4" fill="none" stroke="#dcdcdc" stroke-width="1.35"/></g>
<rect x="211.2" y="414.8" width="12.2" height="10.6" rx="0.8" fill="#5a5a5a"/>
<rect x="223.6" y="414.8" width="10.8" height="10.6" rx="0.8" fill="#0e0e0e"/>
<g transform="translate(211.2 414.8)"><path d="M1.4 3.4H10.8M1.4 7.2H10.8" stroke="#d6d6d6" stroke-width="1.6"/><path d="M3.6 7.2H1.6M9.4 3.4H10.6" stroke="#f4f4f4" stroke-width="1.8"/></g>
<g transform="translate(223.6 414.8)"><path d="M1.6 3.4H9.4M1.6 7.2H9.4" stroke="#e0e0e0" stroke-width=".8"/><path d="M2.6 2.2L1.2 3.4L2.6 4.6ZM8.4 6L9.8 7.2L8.4 8.4Z" fill="#f0f0f0"/><circle cx="9" cy="3.4" r=".9" fill="#f0f0f0"/><circle cx="2" cy="7.2" r=".9" fill="#f0f0f0"/></g>
<g transform="translate(2.7 430.5)"><path d="M.4 3Q4 -.9 7.6 3Q4 6.9 .4 3Z" fill="#f0f0f0"/><circle cx="4" cy="3" r="1.45" fill="#0a0a0a"/><circle cx="4" cy="3" r=".55" fill="#f0f0f0"/></g>
<g transform="translate(73.35 431.8) scale(1.05 1.05) translate(-0 -0)"><path d="M.6 .7L3 3.1L5.4 .7" fill="none" stroke="#dcdcdc" stroke-width="1.35"/></g>
<rect x="83.2" y="427.6" width="94" height="11.4" fill="#555555"/>
<rect x="83.2" y="427.6" width="94" height="0.8" fill="#626262"/>
<rect x="87.5" y="446" width="1.1" height="1.1" fill="#4a4a4a"/>
<g transform="translate(95.4 440.5)"><circle cx="5" cy="6.4" r="3.35" fill="none" stroke="#c6c6c6" stroke-width="1.35"/><path d="M3.7 1.6H6.3" stroke="#c6c6c6" stroke-width="1.1"/><path d="M5 1.6V3.2" stroke="#c6c6c6" stroke-width="1.1"/></g>
<g transform="translate(312.5 439.4)"><path d="M4.70 5.50L4.65 5.67L4.64 5.86L4.67 6.05L4.75 6.25L4.88 6.43L5.05 6.60L5.26 6.73L5.50 6.81L5.77 6.85L6.05 6.83L6.34 6.75L6.61 6.61L6.86 6.41L7.07 6.15L7.23 5.84L7.33 5.50L7.36 5.13L7.31 4.75L7.18 4.38L6.97 4.03L6.69 3.71L6.35 3.45L5.94 3.27L5.50 3.16L5.03 3.14L4.55 3.22L4.09 3.39L3.66 3.66L3.28 4.02L2.98 4.46L2.76 4.96L2.64 5.50L2.63 6.07L2.74 6.64L2.96 7.19L3.30 7.70L3.73 8.14L4.26 8.50L4.85 8.74L5.50 8.87L6.17 8.87L6.84 8.73L7.48 8.46L8.07 8.07L8.57 7.55L8.97 6.94L9.25 6.25L9.39 5.50L9.37 4.73L9.21 3.96L8.89 3.23L8.43 2.57L7.84 2.00L7.13 1.55L6.35 1.25L5.50 1.10" fill="none" stroke="#ababab" stroke-width="1" stroke-linecap="round" stroke-linejoin="round"/></g>
<rect x="87.5" y="458.6" width="1.1" height="1.1" fill="#4a4a4a"/>
<g transform="translate(95.4 453.1)"><circle cx="5" cy="6.4" r="3.35" fill="none" stroke="#c6c6c6" stroke-width="1.35"/><path d="M3.7 1.6H6.3" stroke="#c6c6c6" stroke-width="1.1"/><path d="M5 1.6V3.2" stroke="#c6c6c6" stroke-width="1.1"/></g>
<g transform="translate(312.5 452.1)"><path d="M4.70 5.50L4.65 5.67L4.64 5.86L4.67 6.05L4.75 6.25L4.88 6.43L5.05 6.60L5.26 6.73L5.50 6.81L5.77 6.85L6.05 6.83L6.34 6.75L6.61 6.61L6.86 6.41L7.07 6.15L7.23 5.84L7.33 5.50L7.36 5.13L7.31 4.75L7.18 4.38L6.97 4.03L6.69 3.71L6.35 3.45L5.94 3.27L5.50 3.16L5.03 3.14L4.55 3.22L4.09 3.39L3.66 3.66L3.28 4.02L2.98 4.46L2.76 4.96L2.64 5.50L2.63 6.07L2.74 6.64L2.96 7.19L3.30 7.70L3.73 8.14L4.26 8.50L4.85 8.74L5.50 8.87L6.17 8.87L6.84 8.73L7.48 8.46L8.07 8.07L8.57 7.55L8.97 6.94L9.25 6.25L9.39 5.50L9.37 4.73L9.21 3.96L8.89 3.23L8.43 2.57L7.84 2.00L7.13 1.55L6.35 1.25L5.50 1.10" fill="none" stroke="#ababab" stroke-width="1" stroke-linecap="round" stroke-linejoin="round"/></g>
<g transform="translate(2.7 468.5)"><path d="M.4 3Q4 -.9 7.6 3Q4 6.9 .4 3Z" fill="#f0f0f0"/><circle cx="4" cy="3" r="1.45" fill="#0a0a0a"/><circle cx="4" cy="3" r=".55" fill="#f0f0f0"/></g>
<g transform="translate(72.8 468.8)"><path d="M.7 .6L3.1 3L.7 5.4" fill="none" stroke="#dcdcdc" stroke-width="1.35"/></g>
<rect x="211.8" y="465.8" width="86.4" height="10.6" rx="2.2" fill="#262626"/>
<rect x="212.3" y="466.3" width="85.4" height="9.6" rx="1.8" fill="#111111"/>
<g transform="translate(285.95 468.9) scale(1.15 1.15) translate(-0 -0)"><path d="M.6 .7L3 3.1L5.4 .7" fill="none" stroke="#ececec" stroke-width="1.35"/></g>
<g transform="translate(59.6 481.4)"><path d="M.7 .6L3.1 3L.7 5.4" fill="none" stroke="#dcdcdc" stroke-width="1.35"/></g>
<rect x="391" y="358.4" width="409" height="18.8" fill="#1e1e1e"/>
<rect x="211.8" y="365" width="586.4" height="1.2" fill="#181818"/>
<g transform="translate(391.4 369.4)"><circle cx="2.4" cy="2.5" r="1.5" fill="none" stroke="#3c7fd0" stroke-width="1.1"/><circle cx="5.4" cy="2.5" r="1.5" fill="none" stroke="#3c7fd0" stroke-width="1.1"/></g>
<rect x="406.6" y="368" width="0.8" height="8" fill="#141414"/>
<g transform="translate(412.2 368.8)"><rect x=".3" y="1.2" width="6.8" height="4.7" rx=".7" fill="#e8e8e8"/><rect x="2.4" y=".2" width="2.6" height="1.4" fill="#e8e8e8"/><circle cx="3.7" cy="3.6" r="1.5" fill="#444"/><circle cx="3.7" cy="3.6" r=".7" fill="#e8e8e8"/></g>
<g transform="translate(422.8 368.2)"><g transform="rotate(-40 3.8 3.6)"><rect x=".5" y="2" width="6.6" height="3.2" rx="1.6" fill="none" stroke="#c8c8c8" stroke-width=".8"/><path d="M2.6 3.6H5" stroke="#c8c8c8" stroke-width=".7"/></g></g>
<rect x="434.6" y="368" width="0.8" height="8" fill="#141414"/>
<rect x="439.8" y="368.8" width="28.8" height="6.4" rx="1" fill="#0c0c0c"/>
<rect x="473.9" y="368" width="0.8" height="8" fill="#141414"/>
<rect x="391" y="377.2" width="409" height="1.3" fill="#070707"/>
<rect x="391.4" y="378.5" width="397.4" height="14" fill="#1b1b1b"/>
<rect x="391.4" y="392" width="396.8" height="3.4" fill="#828282"/>
<rect x="391.4" y="395.6" width="396.8" height="9.4" fill="#1b1b1b"/>
<rect x="403.8" y="401.3" width="1" height="2.9" fill="#8c8c8c"/>
<rect x="438.7" y="401.3" width="1" height="2.9" fill="#8c8c8c"/>
<rect x="473.6" y="401.3" width="1" height="2.9" fill="#8c8c8c"/>
<rect x="508.5" y="401.3" width="1" height="2.9" fill="#8c8c8c"/>
<rect x="543.4" y="401.3" width="1" height="2.9" fill="#8c8c8c"/>
<rect x="578.3" y="401.3" width="1" height="2.9" fill="#8c8c8c"/>
<rect x="613.2" y="401.3" width="1" height="2.9" fill="#8c8c8c"/>
<rect x="648.1" y="401.3" width="1" height="2.9" fill="#8c8c8c"/>
<rect x="683" y="401.3" width="1" height="2.9" fill="#8c8c8c"/>
<rect x="717.9" y="401.3" width="1" height="2.9" fill="#8c8c8c"/>
<rect x="752.8" y="401.3" width="1" height="2.9" fill="#8c8c8c"/>
<rect x="787.7" y="401.3" width="1" height="2.9" fill="#8c8c8c"/>
<rect x="391.4" y="404.9" width="396.8" height="6" fill="#767676"/>
<rect x="391.4" y="404.9" width="396.8" height="1.5" fill="#7e7e7e"/>
<rect x="391.4" y="410.7" width="396.8" height="0.9" fill="#6b5a6b"/>
<rect x="391.4" y="411.6" width="396.8" height="2.4" fill="#0cb91a"/>
<rect x="391.4" y="414" width="396.8" height="1.2" fill="#6c6c6c"/>
<rect x="391.4" y="415.2" width="396.8" height="6.4" fill="#2c5431"/>
<rect x="787.8" y="414" width="3.6" height="7.6" fill="#5f5f5f"/>
<rect x="391.4" y="421.6" width="397.4" height="68.4" fill="#242424"/>
<rect x="391.4" y="422" width="397.4" height="0.9" fill="#1a1a1a"/>
<rect x="391.4" y="430.2" width="397.4" height="0.9" fill="#1a1a1a"/>
<rect x="391.4" y="438.8" width="397.4" height="0.9" fill="#1a1a1a"/>
<rect x="391.4" y="447.3" width="397.4" height="0.9" fill="#1a1a1a"/>
<rect x="391.4" y="455.6" width="397.4" height="0.9" fill="#1a1a1a"/>
<rect x="391.4" y="464" width="397.4" height="0.9" fill="#1a1a1a"/>
<rect x="391.4" y="472.4" width="397.4" height="0.9" fill="#1a1a1a"/>
<rect x="391.4" y="480.9" width="397.4" height="0.9" fill="#1a1a1a"/>
<rect x="391.4" y="489.3" width="397.4" height="0.9" fill="#1a1a1a"/>
<rect x="788.8" y="378.5" width="11.2" height="111.5" fill="#1d1d1d"/>
<path d="M788.3 391.3H789.6L791.6 393.8L789.6 396.2H788.3Z" fill="#2f8fe8"/>
<rect x="788.4" y="396.2" width="0.8" height="8.8" fill="#6e6e6e"/>
<rect x="788.4" y="404.8" width="2.8" height="6.8" rx="1.2" fill="#2f8fe8"/>
<g transform="translate(792.4 405.4)"><path d="M.4 .4H5V4.2L2.7 6.2L.4 4.2Z" fill="#e4e4e4"/><path d="M1.8 2.2H3.6" stroke="#666" stroke-width=".7"/></g>
<g transform="translate(791.6 414.6)"><path d="M.4 3.2L2.8 .8H6.2V5.6H2.8Z" fill="#e8e8e8"/><circle cx="4.2" cy="3.2" r="1.1" fill="#333"/></g>
<rect x="390.5" y="377.2" width="1" height="112.8" fill="#0d0d0d"/>
<rect x="0" y="0" width="0.8" height="490" fill="#262626"/>
</svg>
<span style="font-size:5.6px;color:#dcdcdc;font-weight:500;transform:translate(5.01px,3.35px) scaleX(0.7069);">プロジェクト</span>
<span style="font-size:5.6px;color:#b9b9b9;font-weight:500;transform:translate(62.17px,3.32px) scaleX(0.6892);">エフェクトコントロール シェイプレイヤー 1</span>
<span style="font-size:5px;color:#8f8f8f;font-weight:500;transform:translate(55.00px,12.19px) scaleX(0.9795);">コンポ 4▾</span>
<span style="font-size:5.2px;color:#c4c4c4;font-weight:500;transform:translate(55.49px,19.47px) scaleX(0.8648);">1920 x 1080 (1.00)</span>
<span style="font-size:5.2px;color:#c4c4c4;font-weight:500;transform:translate(55.83px,25.40px) scaleX(0.8250);">Δ 0:00:05:00, 30.00 fps</span>
<span style="font-size:4.7px;color:#a8a8a8;font-weight:500;transform:translate(19.61px,75.74px) scaleX(1.0515);">名前</span>
<span style="font-size:5.1px;color:#a9a9a9;font-weight:500;transform:translate(24.64px,81.80px) scaleX(0.9342);">コンポ 1</span>
<span style="font-size:5.1px;color:#a9a9a9;font-weight:500;transform:translate(24.58px,90.30px) scaleX(0.9394);">コンポ 2</span>
<span style="font-size:5.1px;color:#a9a9a9;font-weight:500;transform:translate(24.52px,98.66px) scaleX(0.9328);">コンポ 3</span>
<span style="font-size:5.1px;color:#3c3c3c;font-weight:500;transform:translate(24.71px,106.98px) scaleX(0.9244);">コンポ 4</span>
<span style="font-size:5.6px;color:#d4d4d4;font-weight:500;transform:translate(240.40px,3.32px) scaleX(0.7340);">コンポジション コンポ 4</span>
<span style="font-size:5.6px;color:#d0d0d0;font-weight:500;transform:translate(223.76px,17.47px) scaleX(0.7554);">コンポ 4</span>
<span style="font-size:6.4px;color:#c4c4c4;font-weight:700;transform:translate(70.01px,368.40px) scaleX(0.9228);font-style:italic;">#</span>
<span style="font-size:7.9px;color:#d2d2d2;font-weight:500;transform:translate(91.01px,368.29px) scaleX(0.7979);-webkit-text-stroke:.2px #d2d2d2;">レイヤー名</span>
<span style="font-size:7.9px;color:#c8c8c8;font-weight:500;transform:translate(180.94px,368.01px) scaleX(0.6896);-webkit-text-stroke:.2px #c8c8c8;">キー</span>
<span style="font-size:10.5px;color:#cfcfcf;font-weight:400;transform:translate(242.65px,365.26px) scaleX(0.8076);font-style:italic;">fx</span>
<span style="font-size:7.9px;color:#d2d2d2;font-weight:500;transform:translate(305.90px,368.27px) scaleX(0.7884);-webkit-text-stroke:.2px #d2d2d2;">親とリンク</span>
<span style="font-size:9px;color:#b2b2b2;font-weight:500;transform:translate(69.73px,378.09px) scaleX(0.7477);">2</span>
<span style="font-size:8.4px;color:#ececec;font-weight:500;transform:translate(90.66px,377.74px) scaleX(1.0128);">★</span>
<span style="font-size:7.7px;color:#b4b4b4;font-weight:500;transform:translate(103.23px,379.09px) scaleX(0.8966);">シェイプレイヤー 1</span>
<span style="font-size:7px;color:#d6d6d6;font-weight:500;transform:translate(322.77px,379.49px) scaleX(0.9035);">なし</span>
<span style="font-size:7.7px;color:#adadad;font-weight:500;transform:translate(71.35px,391.56px) scaleX(0.9033);">コンテンツ</span>
<span style="font-size:7.4px;color:#adadad;font-weight:500;transform:translate(270.99px,391.12px) scaleX(1.0202);">追加:</span>
<span style="font-size:7.7px;color:#adadad;font-weight:500;transform:translate(84.99px,403.63px) scaleX(1.0031);">多角形 1</span>
<span style="font-size:6.9px;color:#cfcfcf;font-weight:500;transform:translate(217.22px,406.65px) scaleX(1.1468);">通常</span>
<span style="font-size:7.7px;color:#adadad;font-weight:500;transform:translate(85.22px,417.11px) scaleX(0.9929);">多角形パス 1</span>
<span style="font-size:7.5px;color:#c6c6c6;font-weight:500;transform:translate(84.88px,429.26px) scaleX(1.0191);">旋回 1</span>
<span style="font-size:7.7px;color:#adadad;font-weight:500;transform:translate(108.17px,442.31px) scaleX(1.0655);">角度</span>
<span style="font-size:8.6px;color:#4688da;font-weight:500;transform:translate(212.42px,440.94px) scaleX(0.7965);-webkit-text-stroke:.25px #4688da;">460.0</span>
<span style="font-size:7.7px;color:#adadad;font-weight:500;transform:translate(107.72px,454.79px) scaleX(1.0810);">中央</span>
<span style="font-size:8.6px;color:#4688da;font-weight:500;transform:translate(212.52px,453.97px) scaleX(0.8124);-webkit-text-stroke:.25px #4688da;">0.0,0.0</span>
<span style="font-size:7.7px;color:#adadad;font-weight:500;transform:translate(84.97px,466.98px) scaleX(0.9026);">塗り 1</span>
<span style="font-size:6.9px;color:#cfcfcf;font-weight:500;transform:translate(217.22px,469.45px) scaleX(1.1468);">通常</span>
<span style="font-size:7.7px;color:#adadad;font-weight:500;transform:translate(70.70px,479.96px) scaleX(0.8953);">トランスフォーム</span>
<span style="font-size:7.7px;color:#4688da;font-weight:500;transform:translate(211.45px,480.01px) scaleX(0.7589);">リセット</span>
<span style="font-size:4.8px;color:#e8e8e8;font-weight:500;transform:translate(442.80px,371.09px) scaleX(0.9695);">0:00:00:00</span>
<span style="font-size:5px;color:#b0b0b0;font-weight:500;transform:translate(400.84px,396.16px) scaleX(0.9402);">10f</span>
<span style="font-size:5px;color:#b0b0b0;font-weight:500;transform:translate(436.05px,396.20px) scaleX(0.9127);">20f</span>
<span style="font-size:5px;color:#b0b0b0;font-weight:500;transform:translate(467.79px,396.17px) scaleX(0.8937);">02:00f</span>
<span style="font-size:5px;color:#b0b0b0;font-weight:500;transform:translate(505.58px,396.17px) scaleX(0.9210);">10f</span>
<span style="font-size:5px;color:#b0b0b0;font-weight:500;transform:translate(540.66px,396.21px) scaleX(0.9162);">20f</span>
<span style="font-size:5px;color:#b0b0b0;font-weight:500;transform:translate(572.41px,396.20px) scaleX(0.9219);">03:00f</span>
<span style="font-size:5px;color:#b0b0b0;font-weight:500;transform:translate(610.25px,396.15px) scaleX(0.9378);">10f</span>
<span style="font-size:5px;color:#b0b0b0;font-weight:500;transform:translate(645.60px,396.21px) scaleX(0.8376);">20f</span>
<span style="font-size:5px;color:#b0b0b0;font-weight:500;transform:translate(676.89px,396.22px) scaleX(0.9417);">04:00f</span>
<span style="font-size:5px;color:#b0b0b0;font-weight:500;transform:translate(714.85px,396.15px) scaleX(0.9315);">10f</span>
<span style="font-size:5px;color:#b0b0b0;font-weight:500;transform:translate(750.19px,396.21px) scaleX(0.8575);">20f</span>
<span style="font-size:5px;color:#b0b0b0;font-weight:500;transform:translate(781.55px,396.22px) scaleX(1.0203);">05:0</span>
<svg class="top" width="800" height="490" viewBox="0 0 800 490">
<rect x="53" y="403.9" width="226.1" height="3.1" fill="#d30000"/>
<rect x="53" y="483.9" width="226.1" height="3.1" fill="#d30000"/>
<rect x="53" y="403.9" width="3.1" height="83.1" fill="#d30000"/>
<rect x="276" y="403.9" width="3.1" height="83.1" fill="#d30000"/>
</svg>
</div>
</body>
</html>
